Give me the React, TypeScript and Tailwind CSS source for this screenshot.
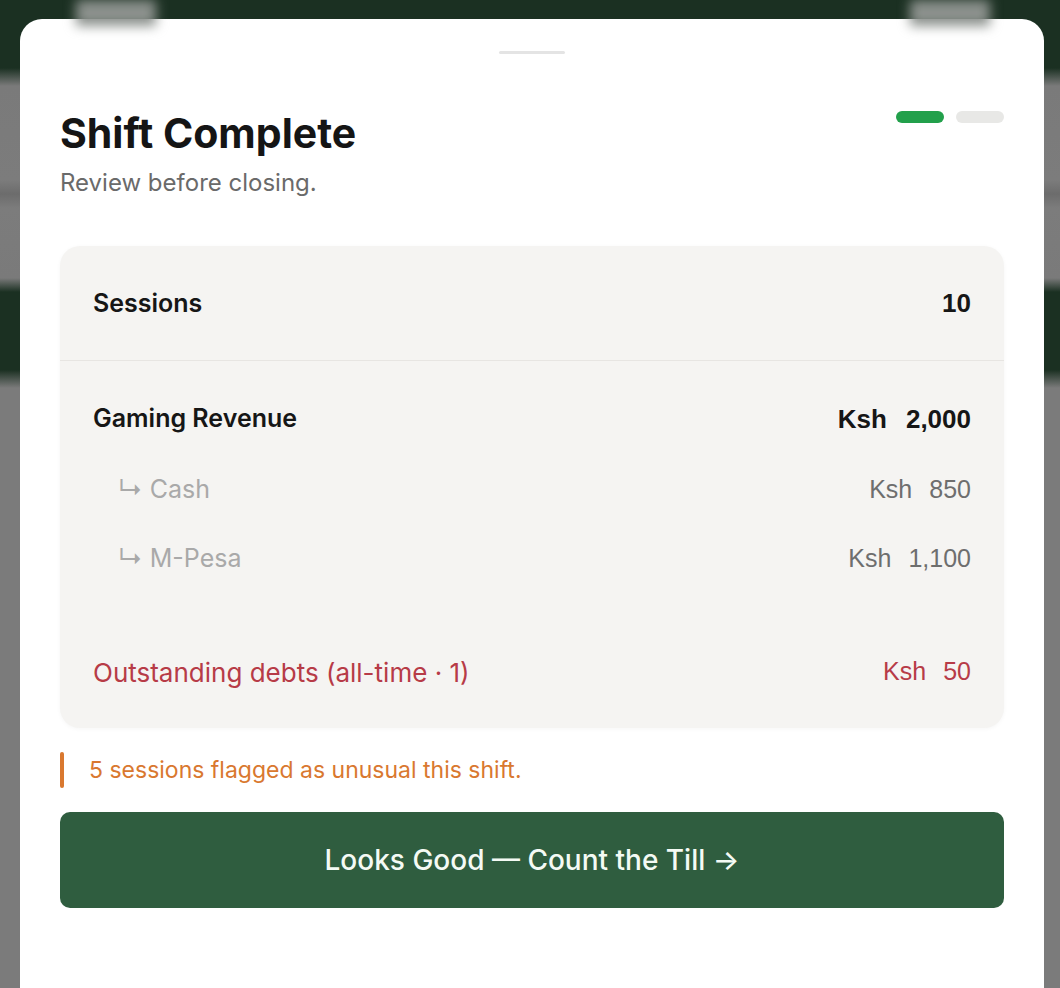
import React from "react";

const sans = "font-['Inter','Noto_Sans',sans-serif]";
const num = "font-['Liberation_Sans',Arial,sans-serif]";

function Amount({ value, className }: { value: string; className: string }) {
  return (
    <span className={`${num} flex items-baseline tabular-nums ${className}`}>
      <span>Ksh</span>
      <span>{value}</span>
    </span>
  );
}

export default function App() {
  return (
    <div
      className={`relative h-[988px] w-full overflow-hidden bg-[linear-gradient(to_bottom,#1b3022_0px,#1b3022_68px,#7a7a7a_86px,#7c7c7c_180px,#6c6c6c_194px,#7c7c7c_208px,#7a7a7a_278px,#1b3022_292px,#1b3022_370px,#7b7b7b_388px,#7b7b7b_988px)] ${sans}`}
    >
      {/* blurred screen behind the sheet */}
      <div className="flex h-[19px] items-start justify-between pl-[76px] pr-[70px]">
        <div className="h-[26px] w-[80px] bg-[#8c918d] blur-[6px]" />
        <div className="h-[26px] w-[80px] bg-[#8c918d] blur-[6px]" />
      </div>

      <div className="ml-[20px] mr-[16px] flex h-[990px] flex-col rounded-t-[22px] bg-white px-[40px]">
        <div className="mx-auto mt-[32px] h-[3px] w-[66px] rounded-full bg-[#e4e4e4]" />

        <div className="mt-[56px] flex items-start justify-between">
          <div>
            <h1 className="text-[41px] font-bold leading-[46px] text-[#151515]">
              Shift Complete
            </h1>
            <p className="mt-[12px] text-[24px] leading-[30px] text-[#6a6a6a]">
              Review before closing.
            </p>
          </div>
          <div className="mt-[1px] flex gap-[12px]">
            <div className="h-[12px] w-[48px] rounded-full bg-[#22a04b]" />
            <div className="h-[12px] w-[48px] rounded-full bg-[#e8e8e6]" />
          </div>
        </div>

        <section className="mt-[48px] rounded-[20px] bg-[#f5f4f2] shadow-[0_1px_4px_rgba(0,0,0,0.04)]">
          <div className="flex items-center justify-between px-[33px] py-[40px]">
            <span className="text-[25px] font-semibold leading-[34px] text-[#161616]">Sessions</span>
            <span className={`${num} text-[26px] font-bold leading-[34px] text-[#161616]`}>10</span>
          </div>
          <div className="h-px bg-[#e7e5e2]" />
          <div className="flex flex-col px-[33px] pb-[38px] pt-[40px]">
            <div className="flex h-[36px] items-center justify-between">
              <span className="text-[25px] font-semibold text-[#161616]">Gaming Revenue</span>
              <Amount value="2,000" className="gap-[19px] text-[26px] font-bold text-[#161616]" />
            </div>
            <div className="mt-[35px] flex h-[36px] items-center justify-between">
              <span className="pl-[25px] text-[25px] text-[#a9a9a9]">↳ Cash</span>
              <Amount value="850" className="gap-[17px] text-[25px] text-[#6e6e6e]" />
            </div>
            <div className="mt-[33px] flex h-[36px] items-center justify-between">
              <span className="pl-[25px] text-[25px] text-[#a9a9a9]">↳ M-Pesa</span>
              <Amount value="1,100" className="gap-[17px] text-[25px] text-[#6e6e6e]" />
            </div>
            <div className="mt-[77px] flex h-[36px] items-center justify-between">
              <span className="text-[26px] text-[#b73b47]">Outstanding debts (all-time · 1)</span>
              <Amount value="50" className="gap-[17px] text-[25px] text-[#b73b47]" />
            </div>
          </div>
        </section>

        <div className="mt-[24px] flex h-[36px] items-center gap-[25px]">
          <div className="h-full w-[4px] rounded-full bg-[#d9782f]" />
          <span className="text-[23px] text-[#d9782f]">5 sessions flagged as unusual this shift.</span>
        </div>

        <button className="mt-[24px] flex h-[96px] w-full items-center justify-center rounded-[10px] bg-[#2f5d3f] text-[28px] font-medium text-[#f4faf4]">
          Looks Good — Count the Till →
        </button>
      </div>
    </div>
  );
}
